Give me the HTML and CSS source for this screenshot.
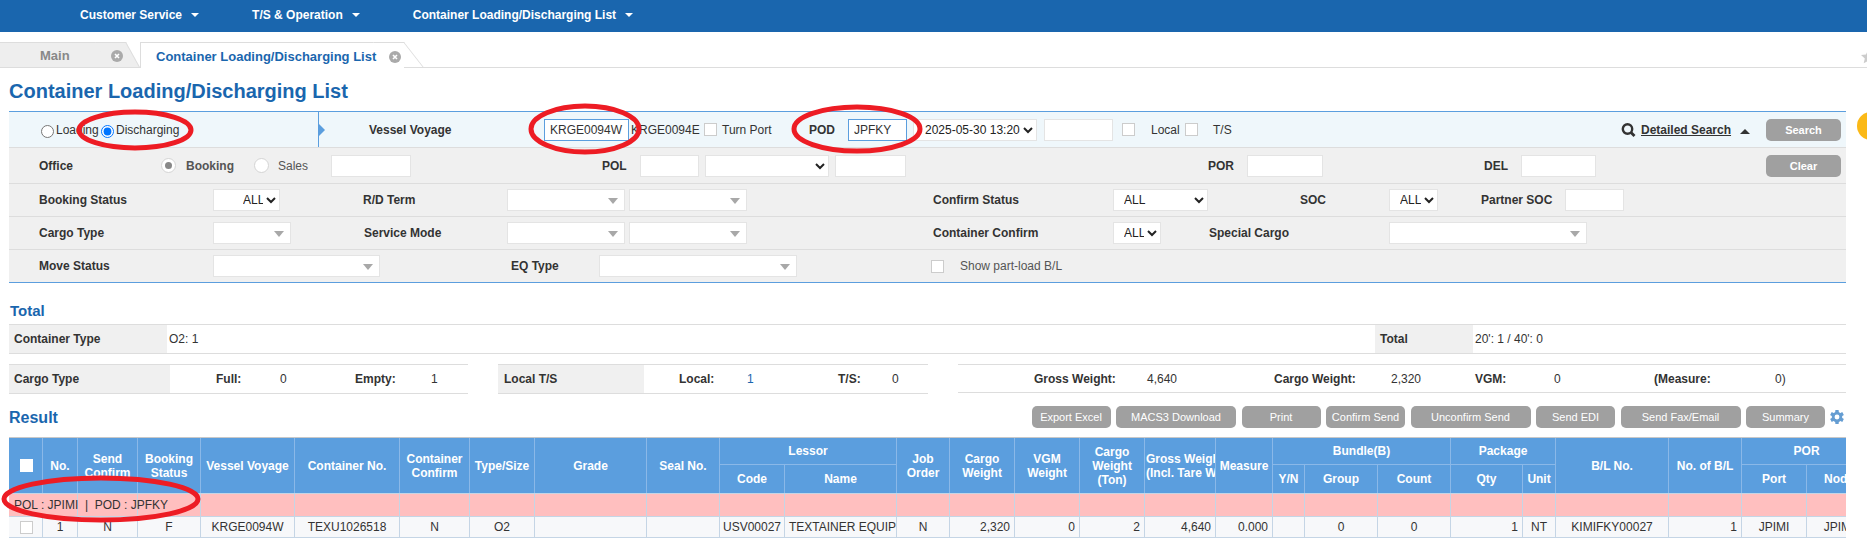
FILE: index.html
```html
<!DOCTYPE html>
<html lang="en">
<head>
<meta charset="utf-8">
<title>Container Loading/Discharging List</title>
<link rel="stylesheet" href="styles.css">
</head>
<body>
<header class="topbar">
  <nav class="topnav">
    <a class="navitem">Customer Service<i class="caret"></i></a>
    <a class="navitem">T/S &amp; Operation<i class="caret"></i></a>
    <a class="navitem">Container Loading/Discharging List<i class="caret"></i></a>
  </nav>
</header>

<div class="tabs">
  <div class="tab tab-main"><span>Main</span><i class="close close-main"><svg viewBox="0 0 12 12" width="12" height="12"><circle cx="6" cy="6" r="6" fill="#aaa"/><path d="M4 4l4 4M8 4l-4 4" stroke="#fff" stroke-width="1.6"/></svg></i></div>
  <div class="tab tab-active"><span>Container Loading/Discharging List</span><i class="close close-active"><svg viewBox="0 0 12 12" width="12" height="12"><circle cx="6" cy="6" r="6" fill="#aaa"/><path d="M4 4l4 4M8 4l-4 4" stroke="#fff" stroke-width="1.6"/></svg></i></div>
</div>
<svg class="star" viewBox="0 0 14 14" width="14" height="14"><path d="M7 0l2 4.6 5 .5-3.8 3.3 1.1 4.9L7 10.800 2.700 13.300l1.100-4.900L0 5.100l5-.5z" fill="#ccc"/></svg>
<i class="sidedot"></i>

<h1 class="pagetitle">Container Loading/Discharging List</h1>

<section class="panel">
  <div class="row row-a">
    <input class="radio" type="radio" name="ld">
    <label class="txt">Loading</label>
    <input class="radio" type="radio" name="ld" checked>
    <label class="txt">Discharging</label>
    <div class="divider b">Vessel Voyage</div>
    <input class="field focus w85" value="KRGE0094W">
    <span class="txt">KRGE0094E</span>
    <i class="check"></i>
    <span class="txt">Turn Port</span>
    <span class="b">POD</span>
    <input class="field focus w59" value="JPFKY">
    <select class="sel w124 p7"><option>2025-05-30 13:20</option></select>
    <input class="field w69">
    <i class="check"></i>
    <span class="txt">Local</span>
    <i class="check"></i>
    <span class="txt">T/S</span>
    <svg class="mag" viewBox="0 0 15 14" width="15" height="14"><circle cx="6.500" cy="6" r="4.700" fill="none" stroke="#333" stroke-width="2.400"/><path d="M10 9.500l3.500 3.500" stroke="#333" stroke-width="2.800"/></svg>
    <a class="detail">Detailed Search</a>
    <i class="uptri"></i>
    <button class="btn btn-bold w75">Search</button>
  </div>
  <div class="row row-b">
    <span class="b">Office</span>
    <i class="dot on"></i>
    <span class="b dim">Booking</span>
    <i class="dot"></i>
    <span class="txt dim">Sales</span>
    <input class="field w80">
    <span class="b">POL</span>
    <input class="field w59">
    <select class="sel w124"><option></option></select>
    <input class="field w71">
    <span class="b">POR</span>
    <input class="field w76">
    <span class="b">DEL</span>
    <input class="field w75">
    <button class="btn btn-bold w75">Clear</button>
  </div>
  <div class="row row-c">
    <span class="b">Booking Status</span>
    <select class="sel w67 p25"><option>ALL</option></select>
    <span class="b">R/D Term</span>
    <span class="combo w118"></span>
    <span class="combo w118"></span>
    <span class="b">Confirm Status</span>
    <select class="sel w95 p6"><option>ALL</option></select>
    <span class="b">SOC</span>
    <select class="sel w49 p6"><option>ALL</option></select>
    <span class="b">Partner SOC</span>
    <input class="field w59">
  </div>
  <div class="row row-d">
    <span class="b">Cargo Type</span>
    <span class="combo w78"></span>
    <span class="b">Service Mode</span>
    <span class="combo w118"></span>
    <span class="combo w118"></span>
    <span class="b">Container Confirm</span>
    <select class="sel w48 p6"><option>ALL</option></select>
    <span class="b">Special Cargo</span>
    <span class="combo w198"></span>
  </div>
  <div class="row row-e">
    <span class="b">Move Status</span>
    <span class="combo w167"></span>
    <span class="b">EQ Type</span>
    <span class="combo w198"></span>
    <i class="check"></i>
    <span class="txt dim">Show part-load B/L</span>
  </div>
</section>

<h2 class="subhead subhead-total">Total</h2>
<div class="totals">
  <div class="lab">Container Type</div>
  <div class="val">O2: 1</div>
  <div class="lab">Total</div>
  <div class="val">20': 1 / 40': 0</div>
</div>

<div class="summary">
  <div class="group group-a">
    <div class="lab">Cargo Type</div>
    <div class="vals vals-a"><b>Full:</b><span>0</span><b>Empty:</b><span>1</span></div>
  </div>
  <div class="group group-b">
    <div class="lab">Local T/S</div>
    <div class="vals vals-b"><b>Local:</b><span class="link">1</span><b>T/S:</b><span>0</span></div>
  </div>
  <div class="group group-c">
    <div class="vals vals-c"><b>Gross Weight:</b><span>4,640</span><b>Cargo Weight:</b><span>2,320</span><b>VGM:</b><span>0</span><b>(Measure:</b><span>0)</span></div>
  </div>
</div>

<div class="toolbar">
  <h2 class="subhead">Result</h2>
  <div class="actions">
    <button class="btn w79">Export Excel</button>
    <button class="btn w120">MACS3 Download</button>
    <button class="btn w79">Print</button>
    <button class="btn w79">Confirm Send</button>
    <button class="btn w120">Unconfirm Send</button>
    <button class="btn w79">Send EDI</button>
    <button class="btn w120">Send Fax/Email</button>
    <button class="btn w79">Summary</button>
  </div>
  <svg class="gear" viewBox="0 0 16 16" width="14" height="14"><g fill="#659dd2"><rect x="6" y="0" width="4" height="16" rx=".5"/><rect x="6" y="0" width="4" height="16" rx=".5" transform="rotate(60 8 8)"/><rect x="6" y="0" width="4" height="16" rx=".5" transform="rotate(120 8 8)"/><circle cx="8" cy="8" r="6"/></g><circle cx="8" cy="8" r="2.800" fill="#fff"/></svg>
</div>

<div class="gridwrap">
  <table class="grid">
    <colgroup>
      <col class="c34"><col class="c35"><col class="c60"><col class="c63"><col class="c94"><col class="c105"><col class="c70"><col class="c65"><col class="c112"><col class="c73"><col class="c65"><col class="c112"><col class="c53"><col class="c65"><col class="c65"><col class="c65"><col class="c71"><col class="c57"><col class="c32"><col class="c73"><col class="c73"><col class="c72"><col class="c33"><col class="c113"><col class="c73"><col class="c65"><col class="c65">
    </colgroup>
    <thead>
      <tr class="head1">
        <th rowspan="2"><i class="check check-head"></i></th>
        <th rowspan="2">No.</th>
        <th rowspan="2">Send<br>Confirm</th>
        <th rowspan="2">Booking<br>Status</th>
        <th rowspan="2">Vessel Voyage</th>
        <th rowspan="2">Container No.</th>
        <th rowspan="2">Container<br>Confirm</th>
        <th rowspan="2">Type/Size</th>
        <th rowspan="2">Grade</th>
        <th rowspan="2">Seal No.</th>
        <th colspan="2">Lessor</th>
        <th rowspan="2">Job<br>Order</th>
        <th rowspan="2">Cargo<br>Weight</th>
        <th rowspan="2">VGM<br>Weight</th>
        <th rowspan="2">Cargo<br>Weight<br>(Ton)</th>
        <th rowspan="2" class="th-left">Gross Weight<br>(Incl. Tare Weight)</th>
        <th rowspan="2">Measure</th>
        <th colspan="3">Bundle(B)</th>
        <th colspan="2">Package</th>
        <th rowspan="2">B/L No.</th>
        <th rowspan="2">No. of B/L</th>
        <th colspan="2">POR</th>
      </tr>
      <tr class="head2">
        <th>Code</th><th>Name</th>
        <th>Y/N</th><th>Group</th><th>Count</th>
        <th>Qty</th><th>Unit</th>
        <th>Port</th><th>Node</th>
      </tr>
    </thead>
    <tbody>
      <tr class="pink">
        <td class="grouptext">POL : JPIMI &nbsp;|&nbsp; POD : JPFKY</td>
        <td></td><td></td><td></td><td></td><td></td><td></td><td></td><td></td><td></td><td></td><td></td><td></td><td></td><td></td><td></td><td></td><td></td><td></td><td></td><td></td><td></td><td></td><td></td><td></td><td></td><td></td>
      </tr>
      <tr class="data">
        <td><i class="check check-cell"></i></td>
        <td>1</td><td>N</td><td>F</td><td>KRGE0094W</td><td>TEXU1026518</td><td>N</td><td>O2</td><td></td><td></td>
        <td>USV00027</td><td class="left">TEXTAINER EQUIPMENT</td><td>N</td>
        <td class="right">2,320</td><td class="right">0</td><td class="right">2</td><td class="right">4,640</td><td class="right">0.000</td>
        <td></td><td>0</td><td>0</td><td class="right">1</td><td>NT</td><td>KIMIFKY00027</td><td class="right">1</td><td>JPIMI</td><td>JPIMI</td>
      </tr>
    </tbody>
  </table>
</div>

<svg class="marks" viewBox="0 0 1867 556" width="1867" height="556">
  <ellipse cx="135" cy="130" rx="56" ry="18" />
  <ellipse cx="585" cy="129" rx="54" ry="23" />
  <ellipse cx="857" cy="129" rx="63" ry="22" />
  <ellipse cx="101" cy="499" rx="97" ry="21" />
</svg>
</body>
</html>
```
FILE: styles.css
```css
* { box-sizing: border-box; }
html, body { margin: 0; height: 556px; overflow: hidden; background: #fff; }
body { position: relative; font: 12px/14px "Liberation Sans", Arial, sans-serif; color: #333; }
i { display: block; font-style: normal; }

.topbar { height: 32px; background: #1a66ae; padding: 0 0 3px 80px; display: flex; align-items: center; }
.topnav { display: flex; gap: 53px; }
.navitem { display: flex; align-items: center; color: #fff; font-weight: 700; }
.caret { margin-left: 9px; border: 4px solid transparent; border-top: 4px solid #fff; border-bottom: 0; }

.tabs { display: flex; margin-top: 10px; height: 26px; border-bottom: 1px solid #ddd; }
.tab { position: relative; isolation: isolate; display: flex; align-items: center; height: 26px; padding-top: 2px; font-size: 13px; font-weight: 700; border-top: 1px solid #ddd; }
.tab::after { content: ""; position: absolute; z-index: -1; top: -1px; bottom: 1px; right: 0; width: 30px; background: inherit; border-top: 1px solid #ddd; border-right: 1px solid #ddd; transform-origin: top right; }
.tab-main { width: 126px; margin-right: 14px; padding-left: 40px; background: #eee; color: #888; height: 25px; }
.tab-main::after { bottom: 0; transform: skewX(29deg); }
.tab-active { width: 264px; padding-left: 15px; background: #fff; color: #1a66ae; border-left: 1px solid #ddd; }
.tab-active::after { transform: skewX(38deg); }
.close-main { margin-left: 41px; height: 12px; }
.close-active { margin-left: 13px; height: 12px; }
.star { position: absolute; left: 1861px; top: 50px; }
.sidedot { position: absolute; left: 1857px; top: 112px; width: 28px; height: 28px; border-radius: 50%; background: #fbb917; }

.pagetitle { margin: 0; height: 43px; padding-left: 9px; font-size: 20px; line-height: 46px; font-weight: 700; color: #1a66ae; }

.panel { margin: 0 21px 0 9px; border-top: 1px solid #5b9ede; }
.row { display: grid; align-items: center; background: #f0f0f0; border-bottom: 1px solid #ddd; padding-left: 30px; height: 33px; }
.row-a { height: 36px; padding-left: 32px; background: #eff7fb; grid-template-columns: 15px 45px 15px 202px 226px 87px 73px 18px 87px 39px 65px 131px 78px 29px 34px 28px 408px 20px 99px 26px 75px; }
.row-b { height: 36px; grid-template-columns: 122px 25px 68px 24px 53px 271px 38px 65px 130px 373px 39px 237px 37px 245px 75px; }
.row-c { grid-template-columns: 174px 150px 144px 122px 304px 180px 187px 89px 92px 84px 59px; }
.row-d { grid-template-columns: 174px 151px 143px 122px 304px 180px 96px 180px 198px; }
.row-e { border-bottom-color: #5b9ede; grid-template-columns: 174px 298px 88px 332px 29px auto; }

.b { font-weight: 700; color: #333; white-space: nowrap; }
.txt { white-space: nowrap; color: #333; }
.dim { color: #555; }
.divider { align-self: stretch; position: relative; display: flex; align-items: center; padding-left: 50px; border-left: 1px solid #5b9ede; }
.divider::before { content: ""; position: absolute; left: 0; top: 12px; border: 6px solid transparent; border-left: 6px solid #5b9ede; border-right: 0; }

.field { height: 22px; padding: 0 5px; border: 1px solid #e4e4e4; background: #fff; font: inherit; color: #333; outline: 0; display: block; }
.field.focus { height: 22px; border-color: #5b9ede; }
.sel { height: 22px; padding: 0; border: 1px solid #e4e4e4; background: #fff; font: inherit; color: #222; outline: 0; border-radius: 0; display: block; }
.p6 { padding-left: 6px; }
.p7 { padding-left: 7px; }
.p25 { padding-left: 25px; }
.combo { position: relative; display: block; height: 22px; background: #fff; border: 1px solid #e4e4e4; }
.combo::after { content: ""; position: absolute; right: 6px; top: 8px; border: 5px solid transparent; border-top: 6px solid #a8a8a8; border-bottom: 0; }

.w48 { width: 48px; } .w49 { width: 49px; } .w59 { width: 59px; } .w67 { width: 67px; } .w69 { width: 69px; }
.w71 { width: 71px; } .w75 { width: 75px; } .w76 { width: 76px; } .w78 { width: 78px; } .w79 { width: 79px; }
.w80 { width: 80px; } .w85 { width: 85px; } .w95 { width: 95px; } .w118 { width: 118px; } .w120 { width: 120px; }
.w124 { width: 124px; } .w167 { width: 167px; } .w198 { width: 198px; }

.radio { margin: 3px 0 0; width: 13px; height: 13px; }
.check { width: 13px; height: 13px; border: 1px solid #ccc; background: #fff; }
.dot { width: 15px; height: 15px; border-radius: 50%; border: 1px solid #d4d4d4; background: #fff; position: relative; }
.dot.on::after { content: ""; position: absolute; left: 3px; top: 3px; width: 7px; height: 7px; border-radius: 50%; background: #888; }
.mag { display: block; }
.detail { font-weight: 700; color: #333; text-decoration: underline; white-space: nowrap; }
.uptri { justify-self: start; width: 0; height: 0; border: 5px solid transparent; border-bottom: 5px solid #333; border-top: 0; margin-top: 3px; }

.btn { height: 22px; padding: 0; border: 0; border-radius: 5px; background: #a0a0a0; color: #fff; font: 11px/22px "Liberation Sans", Arial, sans-serif; text-align: center; }
.btn-bold { font-weight: 700; }

.subhead { margin: 0; font-size: 16px; line-height: 20px; font-weight: 700; color: #1a66ae; }
.subhead-total { height: 41px; padding: 18px 0 0 10px; font-size: 15px; }

.totals { margin: 0 21px 0 9px; height: 30px; display: grid; grid-template-columns: 158px 1208px 98px 1fr; align-items: stretch; border-top: 1px solid #ddd; border-bottom: 1px solid #ddd; }
.lab { display: flex; align-items: center; padding-left: 5px; background: #f0f0f0; font-weight: 700; color: #333; }
.val { display: flex; align-items: center; padding-left: 2px; }

.summary { margin: 10px 21px 0 9px; display: grid; grid-template-columns: 459px 430px 888px; column-gap: 30px; align-items: start; height: 30px; }
.group { display: flex; height: 30px; border-top: 1px solid #ddd; border-bottom: 1px solid #ddd; }
.group-a .lab { width: 161px; }
.group-b .lab { width: 146px; padding-left: 6px; }
.group-c { height: 29px; }
.vals { display: grid; align-items: center; }
.vals-a { padding-left: 46px; grid-template-columns: 64px 75px 76px auto; }
.vals-b { padding-left: 35px; grid-template-columns: 68px 91px 54px auto; }
.vals-c { padding-left: 76px; grid-template-columns: 113px 127px 117px 84px 79px 100px 121px auto; }
.link { color: #1a66ae; }

.toolbar { margin: 0 21px 0 9px; height: 43px; display: flex; align-items: flex-start; padding-top: 12px; }
.toolbar .subhead { margin-top: 2px; }
.actions { margin-left: auto; display: flex; gap: 5.5px; }
.gear { margin: 4px 2px 0 5px; }

.gridwrap { margin: 0 21px 0 9px; overflow: hidden; border-top: 1px solid #c8c8c8; }
.grid { width: 1863px; table-layout: fixed; border-collapse: separate; border-spacing: 0; }
.grid th, .grid td { padding: 0; border-right: 1px solid #c5d5e5; text-align: center; }
.grid th { background: #5b9ede; color: #fff; font-weight: 700; line-height: 14px; border-right-color: #8ab8e8; overflow: hidden; white-space: nowrap; }
.head1 { height: 27px; }
.head2 { height: 28px; }
.head1 th[colspan] { border-bottom: 1px solid #8ab8e8; }
.th-left { text-align: left !important; padding-left: 1px !important; }
.check-head { margin: 0 auto 0 11px; border-color: #fff; }
.pink { height: 23px; background: #ffbfbf; }
.pink td { border-top: 1px solid #c5d5e5; }
.pink .grouptext { white-space: nowrap; text-align: left; padding-left: 5px; border-right: 0; color: #333; }
.data { height: 22px; background: #f7f8fa; }
.data td { border-top: 1px solid #c5d5e5; border-bottom: 1px solid #c5d5e5; white-space: nowrap; overflow: hidden; }
.grid .left { text-align: left; padding-left: 4px; }
.grid .right { text-align: right; padding-right: 4px; }
.check-cell { margin-left: 11px; }

.c32 { width: 32px; } .c33 { width: 33px; } .c34 { width: 34px; } .c35 { width: 35px; } .c53 { width: 53px; } .c57 { width: 57px; }
.c60 { width: 60px; } .c63 { width: 63px; } .c65 { width: 65px; } .c70 { width: 70px; } .c71 { width: 71px; } .c72 { width: 72px; }
.c73 { width: 73px; } .c94 { width: 94px; } .c105 { width: 105px; } .c112 { width: 112px; } .c113 { width: 113px; }

.marks { position: absolute; left: 0; top: 0; pointer-events: none; }
.marks ellipse { fill: none; stroke: #ed1c24; stroke-width: 5; }
```
